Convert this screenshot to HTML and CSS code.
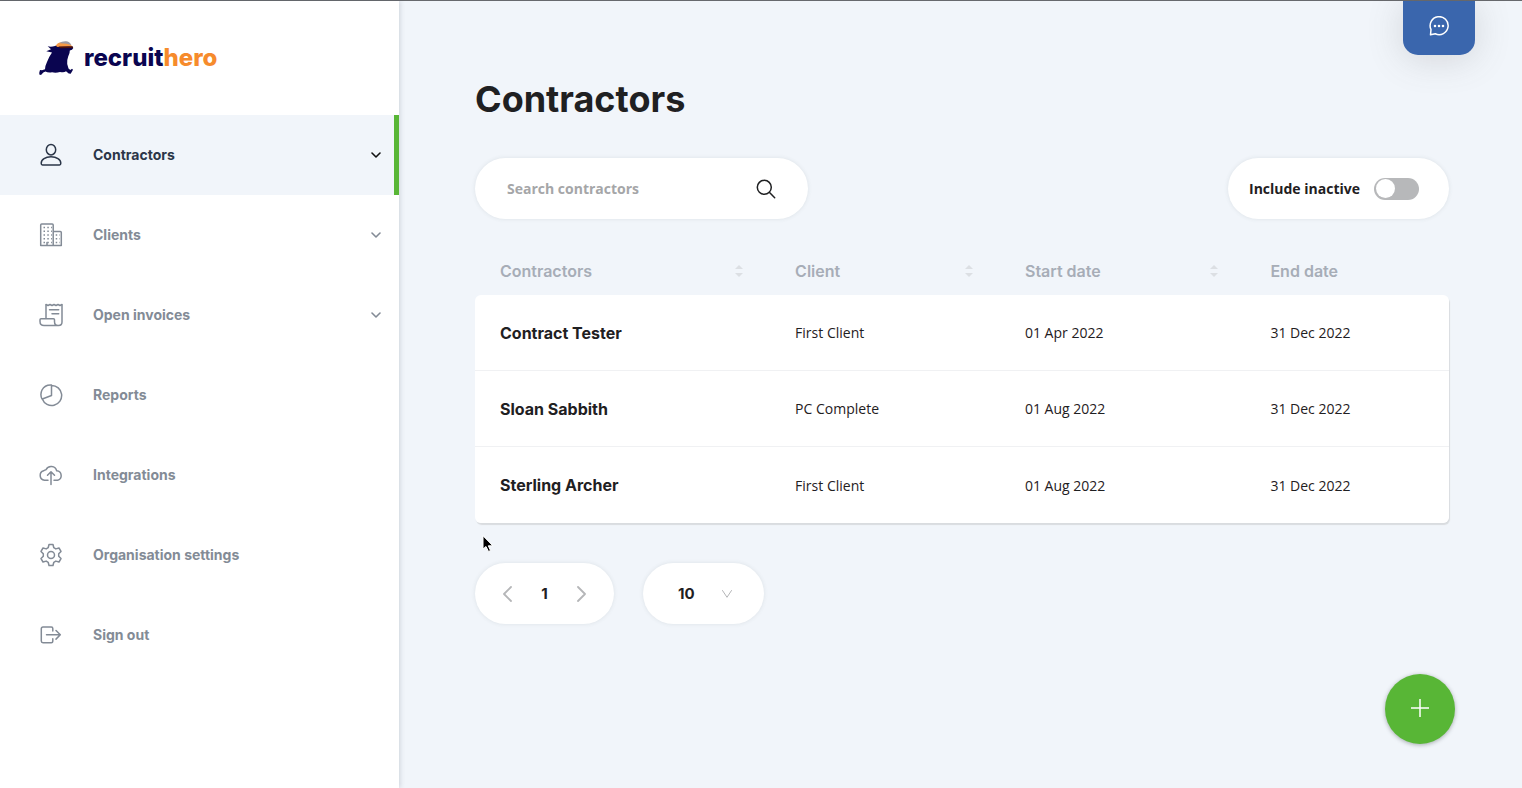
FILE: index.html
```
<!DOCTYPE html>
<html lang="en">
<head>
<meta charset="utf-8">
<meta name="viewport" content="width=device-width, initial-scale=1">
<title>Contractors - recruithero</title>
<link rel="stylesheet" href="styles.css">
</head>
<body>
<div class="app">
  <aside class="sidebar">
    <a class="logo" href="#" aria-label="recruithero home">
      <svg class="logo-mark" viewBox="0 0 38 38" aria-hidden="true">
        <path fill="#0a0550" d="M9.700 7.300Q13 8.300 17 7L20 5.500 34.500 7.500 35.300 9 34 10.800 31.800 11.500Q32 14 30.200 17.500 28.800 21 29.200 25L30.500 29.500 32.300 31 34 29.800 35 30.800 32.700 34.800 30.700 34.500 28 32.300Q26 34 22 32.900 18 34.300 14 33.300 10 34 7.500 32.500L5.300 33.500 3 36 1.300 35.600 1.300 33.500 2 31 4 31.300 7 30.300Q7 27 9 23 10.500 18.500 14 13.500L8.300 12.300 13 10.300Z"/>
        <path fill="#f79a45" d="M17.800 6.800Q19 3.500 24 3.200Q31 3 34.500 7.500L19.500 8Z"/>
        <path fill="#9c9aa3" d="M21 4.200Q24 2 28 2.200Q31.500 2.300 33.500 6.300Q29 4 21 4.200Z"/>
        <path fill="#4a100e" d="M20.500 7.400L34.500 7.300 35 9 22 9.200Z"/>
      </svg>
      <span class="logo-text">recruit<span class="logo-accent">hero</span></span>
    </a>
    <nav class="nav" aria-label="Main">
      <a class="nav-item nav-item-active" href="#" aria-current="page">
        <svg class="nav-icon" viewBox="0 0 24 24"><ellipse cx="12" cy="6.700" rx="4.700" ry="5.200"/><path d="M2.200 20.300C2.200 16.200 6.500 13.800 12 13.800S21.800 16.200 21.800 20.300Q21.800 22 20.500 22H3.500Q2.200 22 2.200 20.300Z"/></svg>
        <span class="nav-label">Contractors</span>
        <svg class="chevron" viewBox="0 0 10 6"><path d="M1 1L5 5 9 1"/></svg>
      </a>
      <a class="nav-item" href="#">
        <svg class="nav-icon" viewBox="0 0 24 24"><path d="M1.700 22.500V2Q1.700 1 2.700 1H13.200Q14.200 1 14.200 2V22.500M14.200 8.500H21.300Q22.300 8.500 22.300 9.500V22.500H1.700M8 19.500V22.500"/><path class="dots" d="M4.500 4.500H13M4.500 8.200H13M4.500 12H13M4.500 15.800H13M4.500 19.500H13M16.700 12H21M16.700 15.800H21M16.700 19.500H21"/></svg>
        <span class="nav-label">Clients</span>
        <svg class="chevron" viewBox="0 0 10 6"><path d="M1 1L5 5 9 1"/></svg>
      </a>
      <a class="nav-item" href="#">
        <svg class="nav-icon" viewBox="0 0 24 24"><path d="M7 15.700V2M23 2V19Q23 22.500 19.500 22.500H5Q1 22.500 1 18.500V16.700Q1 15.700 2 15.700H14.500Q15.500 15.700 15.500 16.700V18.500Q15.500 22.500 19 22.500M10.500 6.700H19.700M13 10.700H19.700"/><path d="M7 1.500L9 2.500 11 1.500 13 2.500 15 1.500 17 2.500 19 1.500 21 2.500 23 1.500"/></svg>
        <span class="nav-label">Open invoices</span>
        <svg class="chevron" viewBox="0 0 10 6"><path d="M1 1L5 5 9 1"/></svg>
      </a>
      <a class="nav-item" href="#">
        <svg class="nav-icon" viewBox="0 0 24 24"><path d="M12.500 2.500A10 10 0 1 1 3.300 16M12.500 2.500V12.500L3.300 16M12.500 12.500V2Q6 1.500 3 7 .800 11.500 3 16"/></svg>
        <span class="nav-label">Reports</span>
      </a>
      <a class="nav-item" href="#">
        <svg class="nav-icon" viewBox="0 0 24 24"><path d="M9 17.200H5.500A4.800 4.800 0 0 1 4.700 7.800 3.700 3.700 0 0 1 7 6.700 5.700 5.700 0 0 1 17.700 7.800 4.800 4.800 0 0 1 18.700 17.200H15M12 21.500V9M8.500 12.300L12 8.800 15.500 12.300"/></svg>
        <span class="nav-label">Integrations</span>
      </a>
      <a class="nav-item" href="#">
        <svg class="nav-icon" viewBox="0 0 24 24"><circle cx="12" cy="12" r="3.500"/><path d="M10 1.500H14L14.800 4.700 16.800 5.900 20 5 22 8.400 19.700 10.800V13.200L22 15.600 20 19 16.800 18.100 14.800 19.300 14 22.500H10L9.200 19.300 7.200 18.100 4 19 2 15.600 4.300 13.200V10.800L2 8.400 4 5 7.200 5.900 9.200 4.700Z"/></svg>
        <span class="nav-label">Organisation settings</span>
      </a>
      <a class="nav-item" href="#">
        <svg class="nav-icon" viewBox="0 0 24 24"><path d="M13.800 8V5.500Q13.800 4 12.300 4H4Q2.300 4 2.300 5.700V18Q2.300 19.700 4 19.700H12.300Q13.800 19.700 13.800 18.200V15.700M7.500 11.800H21M17 7.500L21.300 11.800 17 16.100"/></svg>
        <span class="nav-label">Sign out</span>
      </a>
    </nav>
  </aside>

  <main class="main">
    <h1 class="title">Contractors</h1>
    <div class="toolbar">
      <form class="pill search" role="search">
        <input class="search-input" type="search" placeholder="Search contractors" aria-label="Search contractors">
        <button class="icon-button" type="submit" aria-label="Search">
          <svg class="search-icon" viewBox="0 0 20 20"><circle cx="8.300" cy="8.300" r="7"/><path d="M13.300 13.300L18.700 18.700"/></svg>
        </button>
      </form>
      <label class="pill toggle">
        <span>Include inactive</span>
        <input class="switch" type="checkbox" role="switch">
      </label>
    </div>

    <table class="table">
      <colgroup><col class="col-name"><col class="col-client"><col class="col-start"><col></colgroup>
      <thead>
        <tr>
          <th scope="col"><button class="sort" type="button">Contractors<svg class="sort-icon" viewBox="0 0 8 14"><path d="M0 5L4 1 8 5ZM0 9L4 13 8 9Z"/></svg></button></th>
          <th scope="col"><button class="sort" type="button">Client<svg class="sort-icon" viewBox="0 0 8 14"><path d="M0 5L4 1 8 5ZM0 9L4 13 8 9Z"/></svg></button></th>
          <th scope="col"><button class="sort" type="button">Start date<svg class="sort-icon" viewBox="0 0 8 14"><path d="M0 5L4 1 8 5ZM0 9L4 13 8 9Z"/></svg></button></th>
          <th scope="col">End date</th>
        </tr>
      </thead>
      <tbody>
        <tr><td class="name">Contract Tester</td><td>First Client</td><td>01 Apr 2022</td><td>31 Dec 2022</td></tr>
        <tr><td class="name">Sloan Sabbith</td><td>PC Complete</td><td>01 Aug 2022</td><td>31 Dec 2022</td></tr>
        <tr><td class="name">Sterling Archer</td><td>First Client</td><td>01 Aug 2022</td><td>31 Dec 2022</td></tr>
      </tbody>
    </table>

    <div class="paging">
      <nav class="pill pager" aria-label="Pages">
        <button class="icon-button" type="button" aria-label="Previous page"><svg class="arrow" viewBox="0 0 10 16"><path d="M9 1L2 8 9 15"/></svg></button>
        <span class="page-number">1</span>
        <button class="icon-button" type="button" aria-label="Next page"><svg class="arrow" viewBox="0 0 10 16"><path d="M1 1L8 8 1 15"/></svg></button>
      </nav>
      <div class="pill page-size">
        <select class="size-select" aria-label="Rows per page"><option>10</option><option>25</option><option>50</option></select>
        <svg class="size-chevron" viewBox="0 0 10 8"><path d="M.5 .5L5 7.300 9.500 .5"/></svg>
      </div>
    </div>
  </main>
</div>

<button class="chat" type="button" aria-label="Open chat">
  <svg class="chat-icon" viewBox="0 0 20 20"><path d="M1.500 18.800L2 13.500A9 9 0 1 1 6.300 17.800Z"/><path class="chat-dots" d="M6 10H6.010M10 10H10.010M14 10H14.010"/></svg>
</button>
<button class="fab" type="button" aria-label="Add contractor">
  <svg class="fab-icon" viewBox="0 0 18 18"><path d="M9 0V18M0 9H18"/></svg>
</button>
<svg class="cursor" viewBox="0 0 12 18" aria-hidden="true"><path d="M1 1V14L4 11.500 6.500 16.500 8.500 15.500 6.300 10.800H10.500Z"/></svg>
</body>
</html>
```
FILE: styles.css
```
* {
  box-sizing: border-box;
}

body {
  margin: 0;
  color: #1f2022;
  background: #f1f5fa;
  font-family: "Open Sans", "Noto Sans", sans-serif;
  font-size: 14px;
}

button,
input,
select {
  margin: 0;
  padding: 0;
  border: 0;
  color: inherit;
  background: none;
  font: inherit;
}

svg {
  flex: none;
  fill: none;
  stroke-linecap: round;
  stroke-linejoin: round;
}

.app {
  display: flex;
  min-height: 100vh;
  border-top: 1px solid #67696d;
}

/* Sidebar */
.sidebar {
  flex: none;
  width: 399px;
  background: #fff;
  box-shadow: 1px 0 5px rgba(60, 70, 90, 0.2);
}

.logo {
  display: flex;
  align-items: center;
  gap: 8px;
  height: 114px;
  padding-left: 38px;
  color: #0a0550;
  font: 800 24px/32px Inter, sans-serif;
  text-decoration: none;
}

.logo-mark {
  width: 38px;
  height: 38px;
}

.logo-accent {
  color: #f68b2c;
}

.nav-item {
  display: flex;
  align-items: center;
  height: 80px;
  padding: 0 18px 0 39px;
  color: #838b96;
  font: 700 14px/20px Inter, sans-serif;
  text-decoration: none;
}

.nav-item-active {
  padding-right: 13px;
  border-right: 5px solid #58b636;
  color: #2b3648;
  background: #f1f5fa;
}

.nav-icon {
  width: 24px;
  height: 24px;
  margin-right: 30px;
  stroke: currentColor;
  stroke-width: 1.500;
}

.dots {
  stroke-dasharray: 1.500 2.300;
  stroke-linecap: butt;
}

.nav-label {
  flex: 1;
}

.chevron {
  width: 10px;
  height: 6px;
  stroke: currentColor;
  stroke-width: 1.600;
}

.nav-item-active .chevron {
  stroke: #111;
}

/* Main column */
.main {
  flex: 1;
  min-width: 0;
  padding: 74px 73px 40px 76px;
}

.title {
  margin: 0 0 35px;
  font: 700 36px/48px Inter, sans-serif;
}

.pill {
  display: flex;
  align-items: center;
  height: 61px;
  border-radius: 31px;
  background: #fff;
  box-shadow: 0 0 4px rgba(70, 90, 90, 0.12);
}

.toolbar {
  display: flex;
  justify-content: space-between;
  margin-bottom: 28px;
}

.search {
  width: 333px;
  padding: 0 32px;
}

.search-input {
  flex: 1;
  min-width: 0;
  font-weight: 700;
  outline: 0;
}

.search-input::placeholder {
  color: #a5a6a8;
  opacity: 1;
}

.icon-button {
  display: flex;
  cursor: pointer;
}

.search-icon {
  width: 20px;
  height: 20px;
  stroke: #1f2022;
  stroke-width: 1.500;
}

.toggle {
  gap: 14px;
  padding: 0 30px 0 21px;
  font-weight: 700;
}

.switch {
  display: flex;
  align-items: center;
  width: 45px;
  height: 22px;
  padding: 0 2px;
  border-radius: 11px;
  background: #b7b8ba;
  appearance: none;
}

.switch::before {
  width: 19px;
  height: 19px;
  border-radius: 50%;
  background: #fff;
  content: "";
}

.switch:checked {
  justify-content: flex-end;
  background: #58b636;
}

/* Table */
.table {
  width: 100%;
  margin-bottom: 40px;
  border-spacing: 0;
  table-layout: fixed;
}

.col-name {
  width: 30.300%;
}

.col-client {
  width: 23.600%;
}

.col-start {
  width: 25.200%;
}

.table th {
  height: 48px;
  padding: 0 27px 0 25px;
  color: #a7adb7;
  font: 600 16px/20px Inter, sans-serif;
  text-align: left;
}

.sort {
  display: flex;
  align-items: center;
  justify-content: space-between;
  width: 100%;
}

.sort-icon {
  width: 8px;
  height: 14px;
  fill: #dcdfe3;
}

.table tbody {
  border-radius: 6px;
  box-shadow: 1px 2px 1px #d9dcdf;
}

.table td {
  height: 76px;
  padding: 0 25px;
  border-bottom: 1px solid #f0f1f3;
  background: #fff;
}

.table .name {
  font: 700 16px/20px Inter, sans-serif;
}

.table tbody tr:last-child td {
  border-bottom: 0;
}

.table tbody tr:first-child td:first-child {
  border-top-left-radius: 6px;
}

.table tbody tr:first-child td:last-child {
  border-top-right-radius: 6px;
}

.table tbody tr:last-child td:first-child {
  border-bottom-left-radius: 6px;
}

.table tbody tr:last-child td:last-child {
  border-bottom-right-radius: 6px;
}

/* Paging */
.paging {
  display: flex;
  gap: 29px;
  font: 700 15px/20px Inter, sans-serif;
}

.pager {
  justify-content: space-between;
  width: 139px;
  padding: 0 27px;
}

.arrow {
  width: 10px;
  height: 16px;
  stroke: #b5b6b8;
  stroke-width: 1.800;
}

.page-size {
  display: grid;
  width: 121px;
}

.size-select {
  grid-area: 1 / 1;
  width: 100%;
  height: 100%;
  padding-left: 35px;
  border-radius: 31px;
  appearance: none;
}

.size-chevron {
  grid-area: 1 / 1;
  justify-self: end;
  width: 10px;
  height: 8px;
  margin-right: 32px;
  stroke: #b5b6b8;
  pointer-events: none;
}

/* Floating controls */
.chat {
  position: fixed;
  top: 1px;
  right: 47px;
  display: grid;
  place-items: center;
  width: 72px;
  height: 54px;
  padding-bottom: 4px;
  border-radius: 0 0 15px 15px;
  background: #3a66ad;
  box-shadow: 0 4px 36px rgba(90, 90, 90, 0.2);
}

.chat-icon {
  width: 20px;
  height: 20px;
  stroke: #fff;
  stroke-width: 1.500;
}

.chat-dots {
  stroke-width: 2.600;
}

.fab {
  position: fixed;
  right: 67px;
  bottom: 44px;
  display: grid;
  place-items: center;
  width: 70px;
  height: 70px;
  padding-bottom: 2px;
  border-radius: 50%;
  background: #58b636;
  box-shadow: 0 1px 4px rgba(50, 60, 60, 0.4);
}

.fab-icon {
  width: 18px;
  height: 18px;
  stroke: #fff;
  stroke-width: 1.500;
}

.cursor {
  position: absolute;
  top: 535px;
  left: 482px;
  width: 12px;
  height: 18px;
  fill: #000;
  stroke: #fff;
  pointer-events: none;
}
```
